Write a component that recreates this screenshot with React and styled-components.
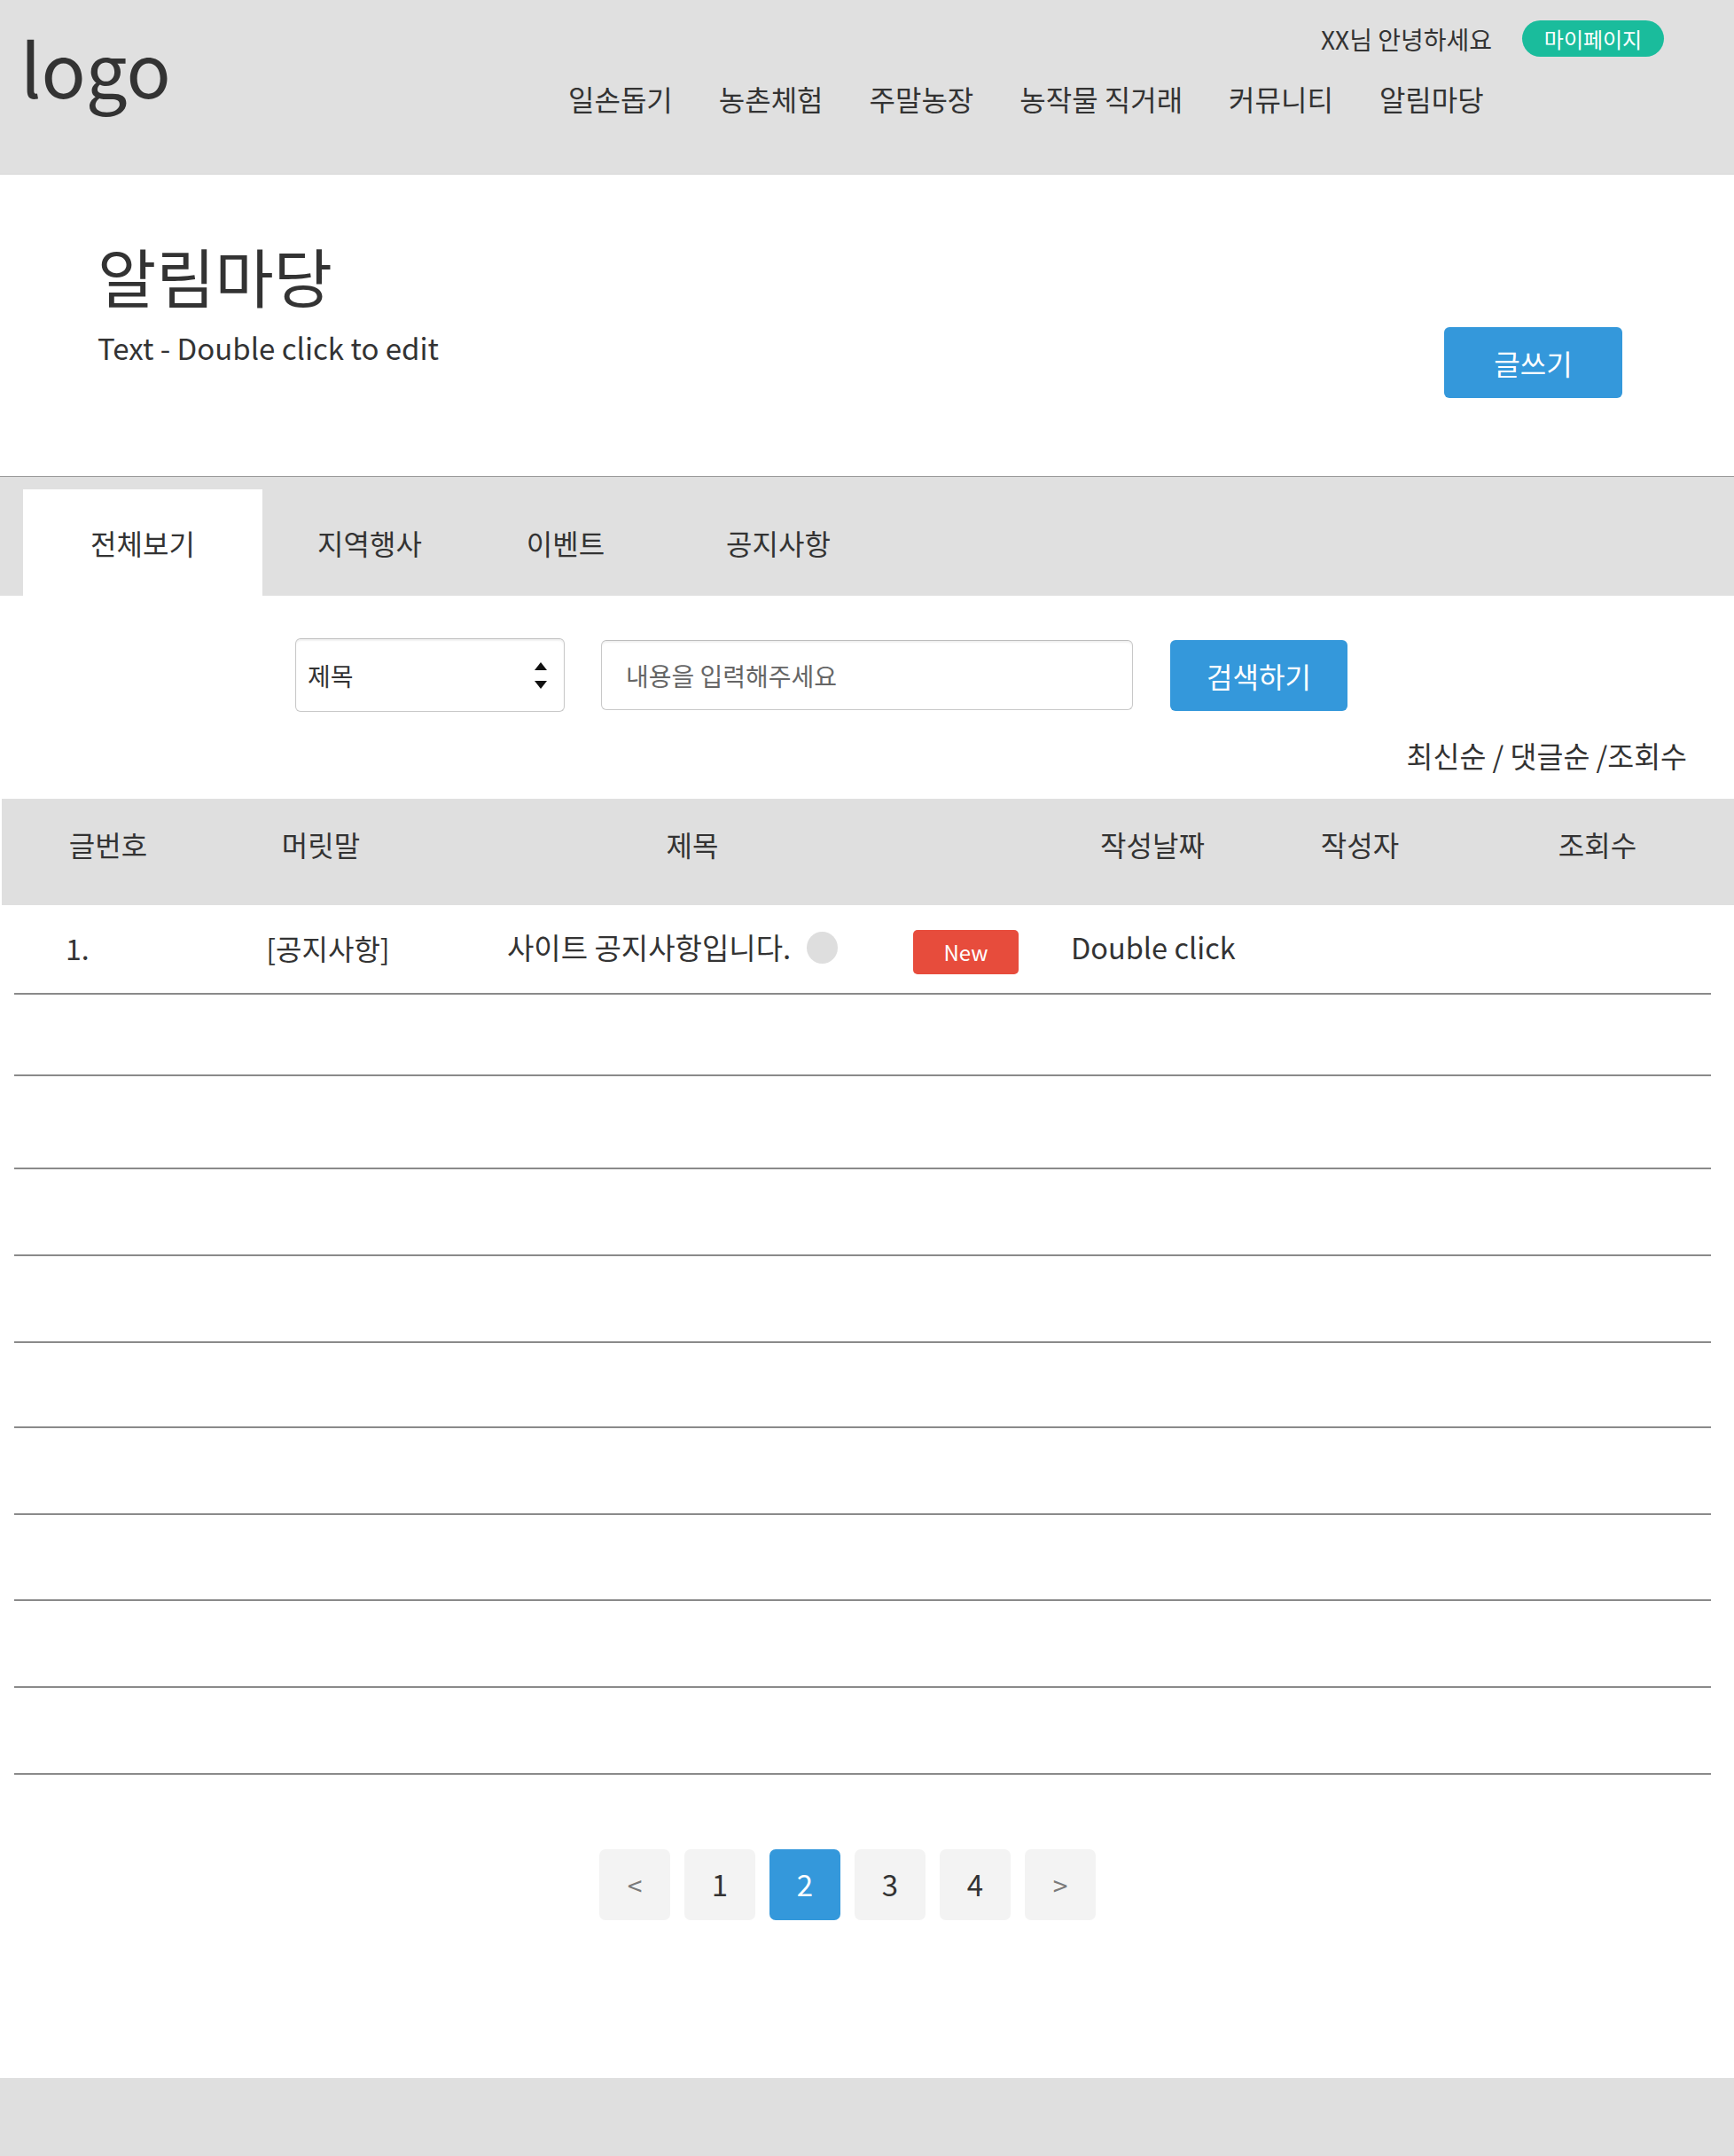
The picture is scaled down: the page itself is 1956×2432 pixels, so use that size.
import styled, { createGlobalStyle, css } from 'styled-components'

const GlobalStyle = createGlobalStyle`
  * {
    box-sizing: border-box;
  }

  body {
    margin: 0;
    background: #fff;
    color: #333;
    font-family: "Noto Sans CJK KR", "Noto Sans", sans-serif;
  }
`

const Page = styled.div`
  min-height: 100vh;
  display: flex;
  flex-direction: column;
`

// header
const Header = styled.header`
  height: 197px;
  display: flex;
  padding-left: 23px;
  background: #e0e0e0;
  border-bottom: 1px solid #d6d6d6;
`

const Logo = styled.div`
  width: 177px;
  margin-top: 34px;
  font-size: 83px;
  line-height: 1;
  color: #333;
`

const HeaderRight = styled.div`
  flex: 1;
  display: flex;
  flex-direction: column;
  padding-top: 23px;
`

const UserBar = styled.div`
  display: flex;
  justify-content: flex-end;
  align-items: center;
  gap: 34px;
  padding-right: 79px;
`

const Greeting = styled.span`
  font-size: 28px;
  line-height: 1;
  color: #333;
`

const MyPage = styled.button`
  width: 160px;
  height: 41px;
  border: none;
  border-radius: 21px;
  background: #1abc9c;
  color: #fff;
  font-family: inherit;
  font-size: 24px;
  line-height: 1;
  padding: 0;
`

const Nav = styled.nav`
  display: flex;
  gap: 52px;
  margin: 31px 0 0 441px;
`

const NavItem = styled.a`
  font-size: 32px;
  line-height: 1;
  color: #333;
  white-space: nowrap;
`

// title area
const Hero = styled.section`
  height: 340px;
  display: flex;
  justify-content: space-between;
  align-items: flex-start;
  padding: 0 126px 0 110px;
`

const TitleBlock = styled.div`
  display: flex;
  flex-direction: column;
  padding-top: 77px;
`

const Title = styled.h1`
  margin: 0;
  font-size: 72px;
  font-weight: 400;
  line-height: 1;
  color: #333;
`

const Subtitle = styled.p`
  margin: 30px 0 0;
  font-size: 33px;
  line-height: 1;
  color: #333;
`

const BlueButton = styled.button`
  width: ${p => p.$w}px;
  height: 80px;
  border: none;
  border-radius: 6px;
  background: #3498db;
  color: #fff;
  font-family: inherit;
  font-size: 32px;
  line-height: 1;
  padding: 0;
`

const WriteButton = styled(BlueButton)`
  margin-top: 172px;
`

// tabs
const TabBar = styled.div`
  height: 135px;
  display: flex;
  padding: 14px 0 0 26px;
  background: #e0e0e0;
  border-top: 1px solid #9a9a9a;
`

const Tab = styled.div`
  width: ${p => p.$w}px;
  display: flex;
  align-items: center;
  justify-content: center;
  font-size: 32px;
  line-height: 1;
  color: #333;
  background: ${p => (p.$active ? '#fff' : 'transparent')};
`

// search
const SearchRow = styled.div`
  display: flex;
  align-items: center;
  margin-top: 48px;
  padding-left: 333px;
`

const fieldBox = css`
  border: 1px solid #c8c8c8;
  border-top-color: #bdbdbd;
  border-radius: 6px;
  background: #fff;
  box-shadow: inset 0 2px 2px rgba(0, 0, 0, 0.06);
  font-family: inherit;
  font-size: 28px;
  color: #333;
`

const Select = styled.div`
  ${fieldBox};
  width: 304px;
  height: 83px;
  display: flex;
  align-items: center;
  justify-content: space-between;
  padding: 0 18px 0 13px;
`

const Input = styled.input`
  ${fieldBox};
  width: 600px;
  height: 79px;
  margin-left: 41px;
  padding: 0 0 0 27px;
  outline: none;

  &::placeholder {
    color: #666;
  }
`

const SearchButton = styled(BlueButton)`
  margin-left: 42px;
`

const Sort = styled.div`
  margin-top: 33px;
  padding-right: 53px;
  text-align: right;
  font-size: 32.5px;
  line-height: 1;
  color: #333;
`

// table
const HeadRow = styled.div`
  height: 120px;
  display: flex;
  align-items: center;
  margin: 32px 0 0 2px;
  padding-bottom: 18px;
  background: #dfdfdf;
`

const HeadCell = styled.div`
  width: ${p => p.$w}px;
  margin-left: ${p => p.$ml || 0}px;
  text-align: center;
  font-size: 32px;
  line-height: 1;
  color: #333;
`

const Rows = styled.div`
  margin: 0 26px 0 16px;
`

const Row = styled.div`
  height: ${p => p.$h}px;
  display: flex;
  align-items: center;
  padding-bottom: 3px;
  border-bottom: 2px solid #8a8a8a;
  font-size: 32px;
  line-height: 1;
  color: #333;
`

const NumCell = styled.div`
  width: 226px;
  padding-left: 58px;
`

const TagCell = styled.div`
  width: 256px;
  text-align: center;
`

const SubjectCell = styled.div`
  width: 458px;
  margin-left: 74px;
  display: flex;
  align-items: center;
  font-size: 33px;
`

const Dot = styled.span`
  width: 35px;
  height: 36px;
  margin-left: 18px;
  border-radius: 50%;
  background: #dedede;
`

const NewBadge = styled.span`
  width: 119px;
  height: 50px;
  margin-top: 10px;
  display: flex;
  align-items: center;
  justify-content: center;
  border-radius: 5px;
  background: #e74c3c;
  color: #fff;
  font-size: 24px;
`

const DateCell = styled.div`
  margin-left: 59px;
  font-size: 32.5px;
`

// pagination
const Pager = styled.div`
  display: flex;
  gap: 16px;
  margin-top: 84px;
  padding-left: 676px;
`

const PageBox = styled.div`
  width: 80px;
  height: 80px;
  display: flex;
  align-items: center;
  justify-content: center;
  border-radius: 7px;
  background: ${p => (p.$active ? '#3498db' : '#f3f3f3')};
  color: ${p => (p.$active ? '#fff' : p.$arrow ? '#7a7a7a' : '#333')};
  font-size: ${p => (p.$arrow ? 30 : 33)}px;
  line-height: 1;
`

const Footer = styled.footer`
  height: 88px;
  margin-top: auto;
  background: #dfdfdf;
`

const Spacer = styled.div`
  height: 178px;
`

const SelectArrows = () => (
  <svg width="16" height="34" viewBox="0 0 16 34">
    <path d="M8 2 L15 11 L1 11 Z" fill="#111" />
    <path d="M1 23 L15 23 L8 32 Z" fill="#111" />
  </svg>
)

const navItems = ['일손돕기', '농촌체험', '주말농장', '농작물 직거래', '커뮤니티', '알림마당']

const tabs = [
  { label: '전체보기', w: 270, active: true },
  { label: '지역행사', w: 242 },
  { label: '이벤트', w: 200 },
  { label: '공지사항', w: 280 },
]

const heads = [
  { label: '글번호', w: 240 },
  { label: '머릿말', w: 240 },
  { label: '제목', w: 598 },
  { label: '작성날짜', w: 240, ml: 100 },
  { label: '작성자', w: 228 },
  { label: '조회수', w: 308 },
]

const emptyRows = [92, 105, 98, 98, 96, 98, 97, 98, 98]

const pages = [
  { label: '<', arrow: true },
  { label: '1' },
  { label: '2', active: true },
  { label: '3' },
  { label: '4' },
  { label: '>', arrow: true },
]

const App = () => {
  return (
    <Page>
      <GlobalStyle />
      <Header>
        <Logo>logo</Logo>
        <HeaderRight>
          <UserBar>
            <Greeting>XX님 안녕하세요</Greeting>
            <MyPage>마이페이지</MyPage>
          </UserBar>
          <Nav>
            {navItems.map(item => (
              <NavItem key={item}>{item}</NavItem>
            ))}
          </Nav>
        </HeaderRight>
      </Header>

      <Hero>
        <TitleBlock>
          <Title>알림마당</Title>
          <Subtitle>Text - Double click to edit</Subtitle>
        </TitleBlock>
        <WriteButton $w={201}>글쓰기</WriteButton>
      </Hero>

      <TabBar>
        {tabs.map(tab => (
          <Tab key={tab.label} $w={tab.w} $active={tab.active}>
            {tab.label}
          </Tab>
        ))}
      </TabBar>

      <SearchRow>
        <Select>
          <span>제목</span>
          <SelectArrows />
        </Select>
        <Input placeholder="내용을 입력해주세요" />
        <SearchButton $w={200}>검색하기</SearchButton>
      </SearchRow>

      <Sort>최신순 / 댓글순 /조회수</Sort>

      <HeadRow>
        {heads.map(h => (
          <HeadCell key={h.label} $w={h.w} $ml={h.ml}>
            {h.label}
          </HeadCell>
        ))}
      </HeadRow>

      <Rows>
        <Row $h={101}>
          <NumCell>1.</NumCell>
          <TagCell>[공지사항]</TagCell>
          <SubjectCell>
            사이트 공지사항입니다.
            <Dot />
          </SubjectCell>
          <NewBadge>New</NewBadge>
          <DateCell>Double click</DateCell>
        </Row>
        {emptyRows.map((h, i) => (
          <Row key={i} $h={h} />
        ))}
      </Rows>

      <Pager>
        {pages.map(p => (
          <PageBox key={p.label} $active={p.active} $arrow={p.arrow}>
            {p.label}
          </PageBox>
        ))}
      </Pager>

      <Spacer />
      <Footer />
    </Page>
  )
}

export default App
